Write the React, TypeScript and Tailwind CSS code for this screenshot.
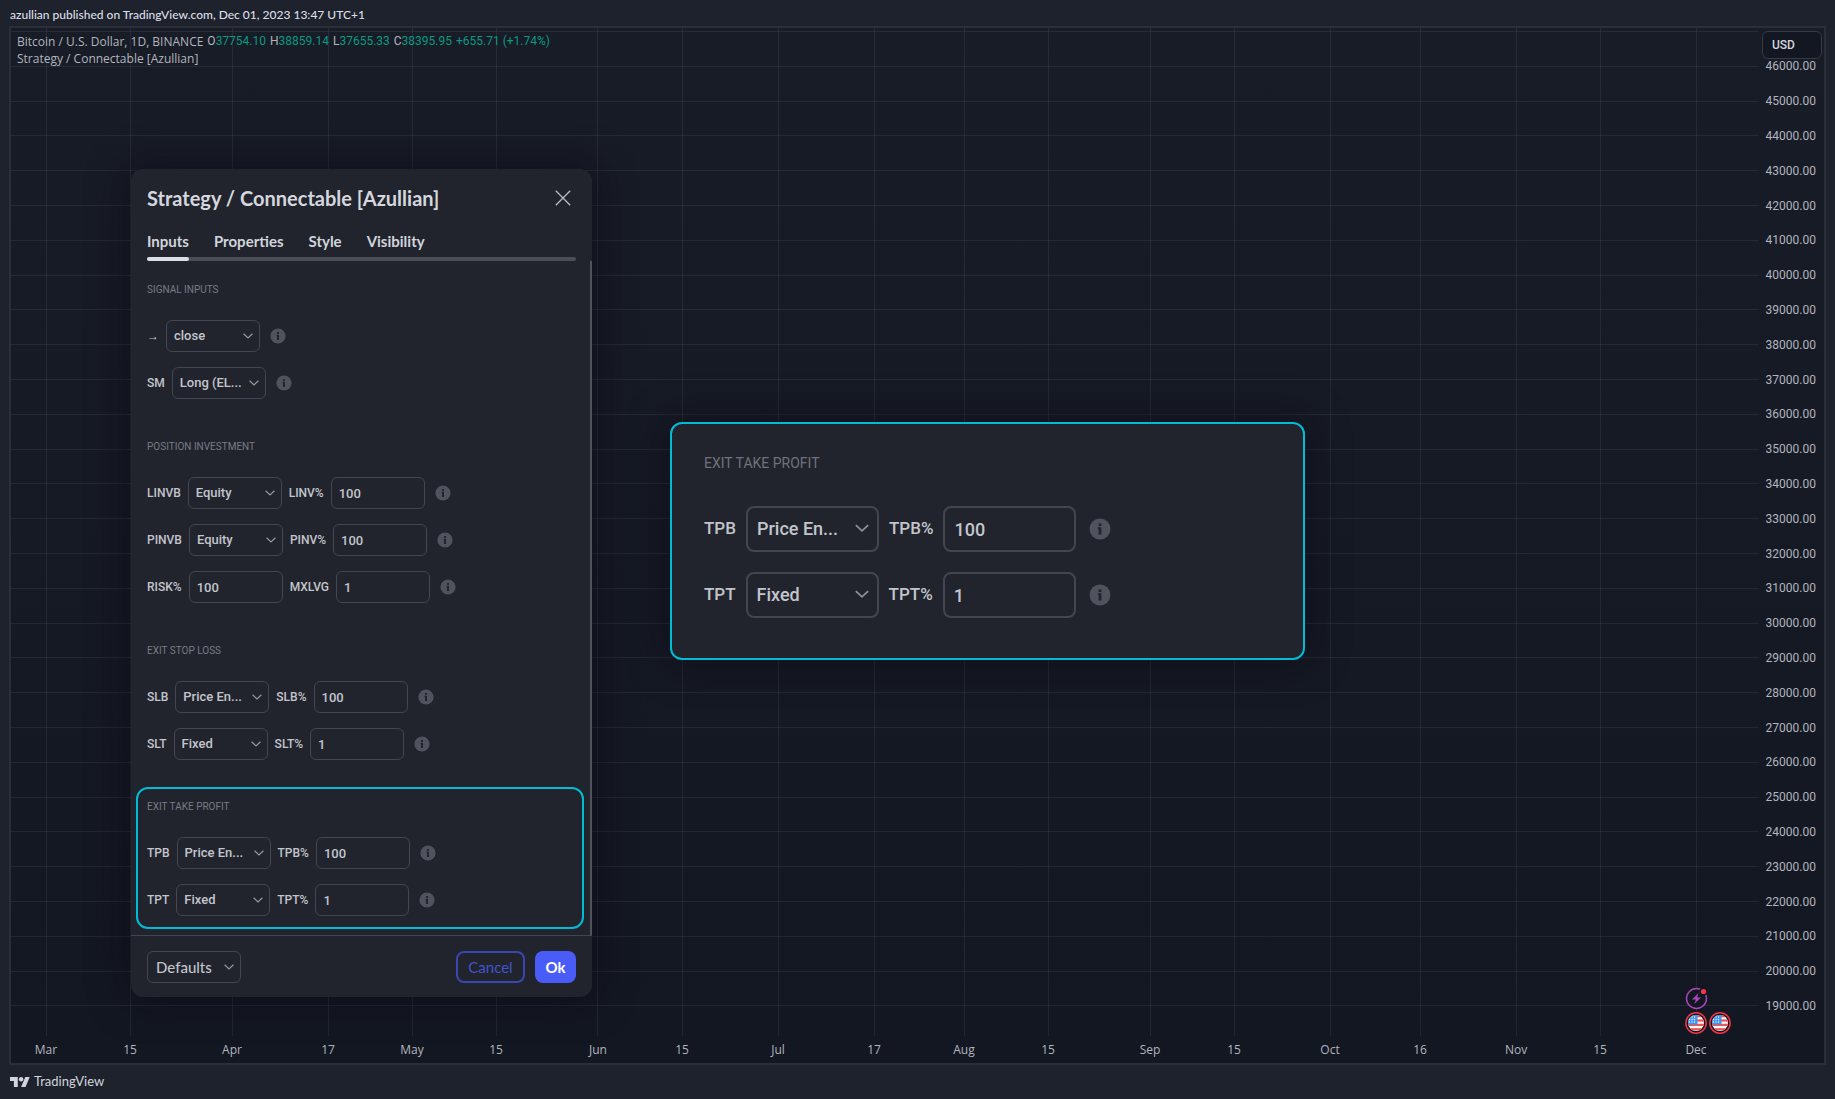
import { useId } from 'react';

interface FieldData {
  label: string;
  value: string;
  kind: 'select' | 'input';
}

interface SectionData {
  title: string;
  rows: FieldData[][];
}

const takeProfit: SectionData = {
  title: 'EXIT TAKE PROFIT',
  rows: [
    [
      { label: 'TPB', value: 'Price En...', kind: 'select' },
      { label: 'TPB%', value: '100', kind: 'input' },
    ],
    [
      { label: 'TPT', value: 'Fixed', kind: 'select' },
      { label: 'TPT%', value: '1', kind: 'input' },
    ],
  ],
};

const sections: SectionData[] = [
  {
    title: 'SIGNAL INPUTS',
    rows: [
      [{ label: '→', value: 'close', kind: 'select' }],
      [{ label: 'SM', value: 'Long (EL...', kind: 'select' }],
    ],
  },
  {
    title: 'POSITION INVESTMENT',
    rows: [
      [
        { label: 'LINVB', value: 'Equity', kind: 'select' },
        { label: 'LINV%', value: '100', kind: 'input' },
      ],
      [
        { label: 'PINVB', value: 'Equity', kind: 'select' },
        { label: 'PINV%', value: '100', kind: 'input' },
      ],
      [
        { label: 'RISK%', value: '100', kind: 'input' },
        { label: 'MXLVG', value: '1', kind: 'input' },
      ],
    ],
  },
  {
    title: 'EXIT STOP LOSS',
    rows: [
      [
        { label: 'SLB', value: 'Price En...', kind: 'select' },
        { label: 'SLB%', value: '100', kind: 'input' },
      ],
      [
        { label: 'SLT', value: 'Fixed', kind: 'select' },
        { label: 'SLT%', value: '1', kind: 'input' },
      ],
    ],
  },
];

// day = days since Mar 1
const ticks = [
  { day: 0, label: 'Mar' },
  { day: 14, label: '15' },
  { day: 31, label: 'Apr' },
  { day: 47, label: '17' },
  { day: 61, label: 'May' },
  { day: 75, label: '15' },
  { day: 92, label: 'Jun' },
  { day: 106, label: '15' },
  { day: 122, label: 'Jul' },
  { day: 138, label: '17' },
  { day: 153, label: 'Aug' },
  { day: 167, label: '15' },
  { day: 184, label: 'Sep' },
  { day: 198, label: '15' },
  { day: 214, label: 'Oct' },
  { day: 229, label: '16' },
  { day: 245, label: 'Nov' },
  { day: 259, label: '15' },
  { day: 275, label: 'Dec' },
];

const prices = Array.from({ length: 28 }, (_, i) => 46000 - i * 1000);

const dayX = (day: number) => `${((35 + day * 6) / 1748) * 100}%`;
const priceY = (price: number) => `${((38.3 + ((46000 - price) / 1000) * 34.8) / 1008) * 100}%`;

const ohlc = [
  ['O', '37754.10'],
  ['H', '38859.14'],
  ['L', '37655.33'],
  ['C', '38395.95'],
];

function Chevron({ className }: { className: string }) {
  return (
    <svg viewBox="0 0 10 6" fill="none" stroke="currentColor" strokeWidth="1.2" className={className}>
      <path d="M0.6 0.8 L5 4.9 L9.4 0.8" />
    </svg>
  );
}

function InfoIcon({ large }: { large?: boolean }) {
  return (
    <svg viewBox="0 0 16 16" className={large ? 'ml-[3px] size-[22px]' : 'ml-[3px] size-4'}>
      <circle cx="8" cy="8" r="7.6" fill="#50535e" />
      <rect x="7" y="4" width="2" height="1.8" fill="#21242c" />
      <path d="M6.4 6.8 H9 V12 H7 V7.8 H6.4 Z" fill="#21242c" />
    </svg>
  );
}

function Field({ field, large }: { field: FieldData; large?: boolean }) {
  const id = useId();
  const box = large
    ? 'h-[46px] w-[133px] rounded-lg border-2 pl-[9px] text-lg'
    : 'h-8 w-[94px] rounded-md border pl-[7px] text-[13px]';
  return (
    <>
      <label htmlFor={id} className={large ? 'text-[17px] font-medium' : 'text-xs font-medium'}>
        {field.label}
      </label>
      {field.kind === 'select' ? (
        <div className="relative">
          <select id={id} className={`${box} block appearance-none border-[#434651] bg-transparent font-medium`}>
            <option>{field.value}</option>
          </select>
          <Chevron
            className={
              large
                ? 'pointer-events-none absolute top-[18px] right-2.5 w-3.5 text-[#8f929c]'
                : 'pointer-events-none absolute top-[13px] right-[7px] w-2.5 text-[#9598a1]'
            }
          />
        </div>
      ) : (
        <input id={id} defaultValue={field.value} className={`${box} border-[#434651] bg-transparent font-medium`} />
      )}
    </>
  );
}

function Section({ section, large }: { section: SectionData; large?: boolean }) {
  return (
    <section
      className={`flex flex-col font-[Roboto,'Liberation_Sans',sans-serif] ${large ? 'gap-5' : 'gap-[15px]'}`}
    >
      <h3
        className={
          large
            ? 'flex h-[46px] items-center text-sm text-[#6f727d]'
            : 'flex h-8 items-center text-[10px] text-[#787b86]'
        }
      >
        {section.title}
      </h3>
      {section.rows.map((row) => (
        <div key={row[0].label} className={large ? 'flex items-center gap-2.5' : 'flex items-center gap-[7px]'}>
          {row.map((field) => (
            <Field key={field.label} field={field} large={large} />
          ))}
          <InfoIcon large={large} />
        </div>
      ))}
    </section>
  );
}

function SettingsDialog() {
  return (
    <div
      role="dialog"
      aria-label="Strategy / Connectable [Azullian]"
      className="absolute top-[169px] left-[131px] w-[461px] rounded-xl bg-[#21242c] text-[#c3c5cd] shadow-[0_0_40px_rgba(8,9,18,0.6)]"
    >
      <header className="px-4 pt-[15px]">
        <div className="flex h-7 items-center justify-between">
          <h2 className="text-xl font-bold text-[#d5d7df]">Strategy / Connectable [Azullian]</h2>
          <button aria-label="Close" className="pr-[5px]">
            <svg viewBox="0 0 16 16" stroke="#b9bbc4" strokeWidth="1.3" className="size-4">
              <path d="M0.8 0.8 L15.2 15.2 M15.2 0.8 L0.8 15.2" />
            </svg>
          </button>
        </div>
        <nav className="relative mt-[17px] flex gap-[25px]">
          <span className="absolute bottom-0 h-1 w-full rounded-full bg-[#4a4d57]" />
          {['Inputs', 'Properties', 'Style', 'Visibility'].map((tab, i) => (
            <button key={tab} className="relative h-8 pb-2 text-[15px] font-bold text-[#d1d4dc]">
              {tab}
              {i === 0 && <span className="absolute bottom-0 left-0 h-1 w-full rounded-full bg-[#dbdde6]" />}
            </button>
          ))}
        </nav>
      </header>

      <div className="flex flex-col gap-[31px] border-r-2 border-[#50535e] px-4 pt-3 pb-1.5">
        {sections.map((section) => (
          <Section key={section.title} section={section} />
        ))}
        <div className="-mt-1 -mr-2.5 -ml-[11px] rounded-xl border-2 border-[#00bcd4] pt-px pb-[11px] pl-[9px]">
          <Section section={takeProfit} />
        </div>
      </div>

      <footer className="flex items-center border-t border-[#434651] px-4 pt-[15px] pb-3.5">
        <div className="relative mr-auto">
          <select
            aria-label="Defaults"
            className="block h-8 w-[94px] appearance-none rounded-md border border-[#434651] pl-2 text-[15px] font-medium"
          >
            <option>Defaults</option>
          </select>
          <Chevron className="pointer-events-none absolute top-[13px] right-[7px] w-2.5 text-[#9598a1]" />
        </div>
        <button className="h-8 w-[69px] rounded-lg border-2 border-[#3a47b0] text-[15px] text-[#4352d0]">Cancel</button>
        <button className="ml-2.5 h-8 w-[41px] rounded-lg bg-[#4a5cf8] text-[15px] font-bold text-white">Ok</button>
      </footer>
    </div>
  );
}

function FlagMarker() {
  return (
    <>
      <circle r="10.2" fill="#131722" stroke="#f23645" strokeWidth="1.5" />
      <g clipPath="url(#flag)">
        <rect x="-8" y="-8" width="16" height="16" fill="#f4f6fa" />
        {[-8, -3.6, 0.8, 5.2].map((y) => (
          <rect key={y} x="-8" y={y} width="16" height="2.2" fill="#ef5350" />
        ))}
        <rect x="-8" y="-8" width="9.5" height="9.5" fill="#3d95f0" />
        {[-6, -3.5, -1].map((y) =>
          [-6.5, -4, -1.5].map((x) => <circle key={`${x},${y}`} cx={x} cy={y} r="0.7" fill="#fff" />)
        )}
      </g>
    </>
  );
}

function Chart() {
  return (
    <div className="flex flex-1 flex-col">
      <div className="flex flex-1">
        <div className="relative flex-1">
          <svg className="absolute inset-0 size-full overflow-visible">
            <clipPath id="flag">
              <circle r="8" />
            </clipPath>
            <g stroke="#f0f3fa" strokeOpacity="0.07" shapeRendering="crispEdges">
              {ticks.map((t) => (
                <line key={t.day} x1={dayX(t.day)} x2={dayX(t.day)} y1="0" y2="100%" />
              ))}
              {[47000, ...prices].map((p) => (
                <line key={p} x1="0" x2="100%" y1={priceY(p)} y2={priceY(p)} />
              ))}
            </g>
            <svg x={dayX(275)} y="100%" className="overflow-visible">
              <g transform="translate(0.5 -37.5)">
                <circle r="10" fill="#131722" stroke="#ab47bc" strokeWidth="1.4" />
                <path d="M2 -5.5 L-4.5 1 H-0.6 L-2.2 5.5 L4.5 -1 H0.6 Z" fill="#ab47bc" />
                <circle cx="7" cy="-7" r="4.2" fill="#131722" />
                <circle cx="7" cy="-7" r="2.6" fill="#f23645" />
              </g>
              <g transform="translate(0 -13)">
                <FlagMarker />
              </g>
              <g transform="translate(24 -13)">
                <FlagMarker />
              </g>
            </svg>
          </svg>
        </div>
        <svg className="w-[65px] fill-[#b2b5be] font-[Roboto,sans-serif] text-xs">
          {prices.map((p) => (
            <text key={p} x="57" y={priceY(p)} dy="4" textAnchor="end">
              {p}.00
            </text>
          ))}
        </svg>
      </div>
      <div className="flex pr-[65px]">
        <svg className="h-[27px] flex-1 overflow-visible fill-[#b2b5be] font-['Open_Sans',sans-serif] text-xs">
          {ticks.map((t) => (
            <text key={t.day} x={dayX(t.day)} y="18" textAnchor="middle">
              {t.label}
            </text>
          ))}
        </svg>
      </div>
    </div>
  );
}

export default function App() {
  return (
    <div className="relative flex min-h-screen flex-col bg-[#1e222d] px-[9px] font-[Lato,sans-serif] text-[#d1d4dc]">
      <header className="flex h-[26px] items-center pt-1 pl-px text-xs font-medium text-[#dcdee5]">
        azullian published on TradingView.com, Dec 01, 2023 13:47 UTC+1
      </header>

      <main className="relative flex flex-1 flex-col border-2 border-[#2a2e39] bg-linear-to-b from-[#181c27] to-[#131722]">
        <Chart />
        <div className="absolute top-[5px] left-1.5 font-['Open_Sans',sans-serif] text-xs leading-[17px] text-[#b2b5be]">
          <div className="flex gap-1">
            <span>Bitcoin / U.S. Dollar, 1D, BINANCE</span>
            {ohlc.map(([k, v]) => (
              <span key={k} className="font-[Roboto,sans-serif]">
                {k}
                <span className="text-[#089981]">{v}</span>
              </span>
            ))}
            <span className="font-[Roboto,sans-serif] text-[#089981]">+655.71 (+1.74%)</span>
          </div>
          <div>Strategy / Connectable [Azullian]</div>
        </div>
        <button className="absolute top-[3px] right-0.5 h-7 w-[60px] rounded-md border border-[#363a45] bg-[#131722] pl-[9px] text-left font-[Roboto,sans-serif] text-xs font-medium">
          USD
        </button>
      </main>

      <footer className="flex h-[34px] items-center gap-1 text-[13px]">
        <svg viewBox="0 4 36 18" fill="currentColor" className="ml-px h-2.5 w-5">
          <path d="M14 22H7V11H0V4h14v18zM28 22h-8l7.5-18h8L28 22z" />
          <circle cx="20" cy="8" r="4" />
        </svg>
        TradingView
      </footer>

      <SettingsDialog />

      <div className="absolute top-[422px] left-[670px] w-[635px] rounded-xl border-2 border-[#00bcd4] bg-[#21242c] pt-4 pb-10 pl-8 text-[#c3c5cd] shadow-[0_0_40px_rgba(8,9,18,0.6)]">
        <Section section={takeProfit} large />
      </div>
    </div>
  );
}
